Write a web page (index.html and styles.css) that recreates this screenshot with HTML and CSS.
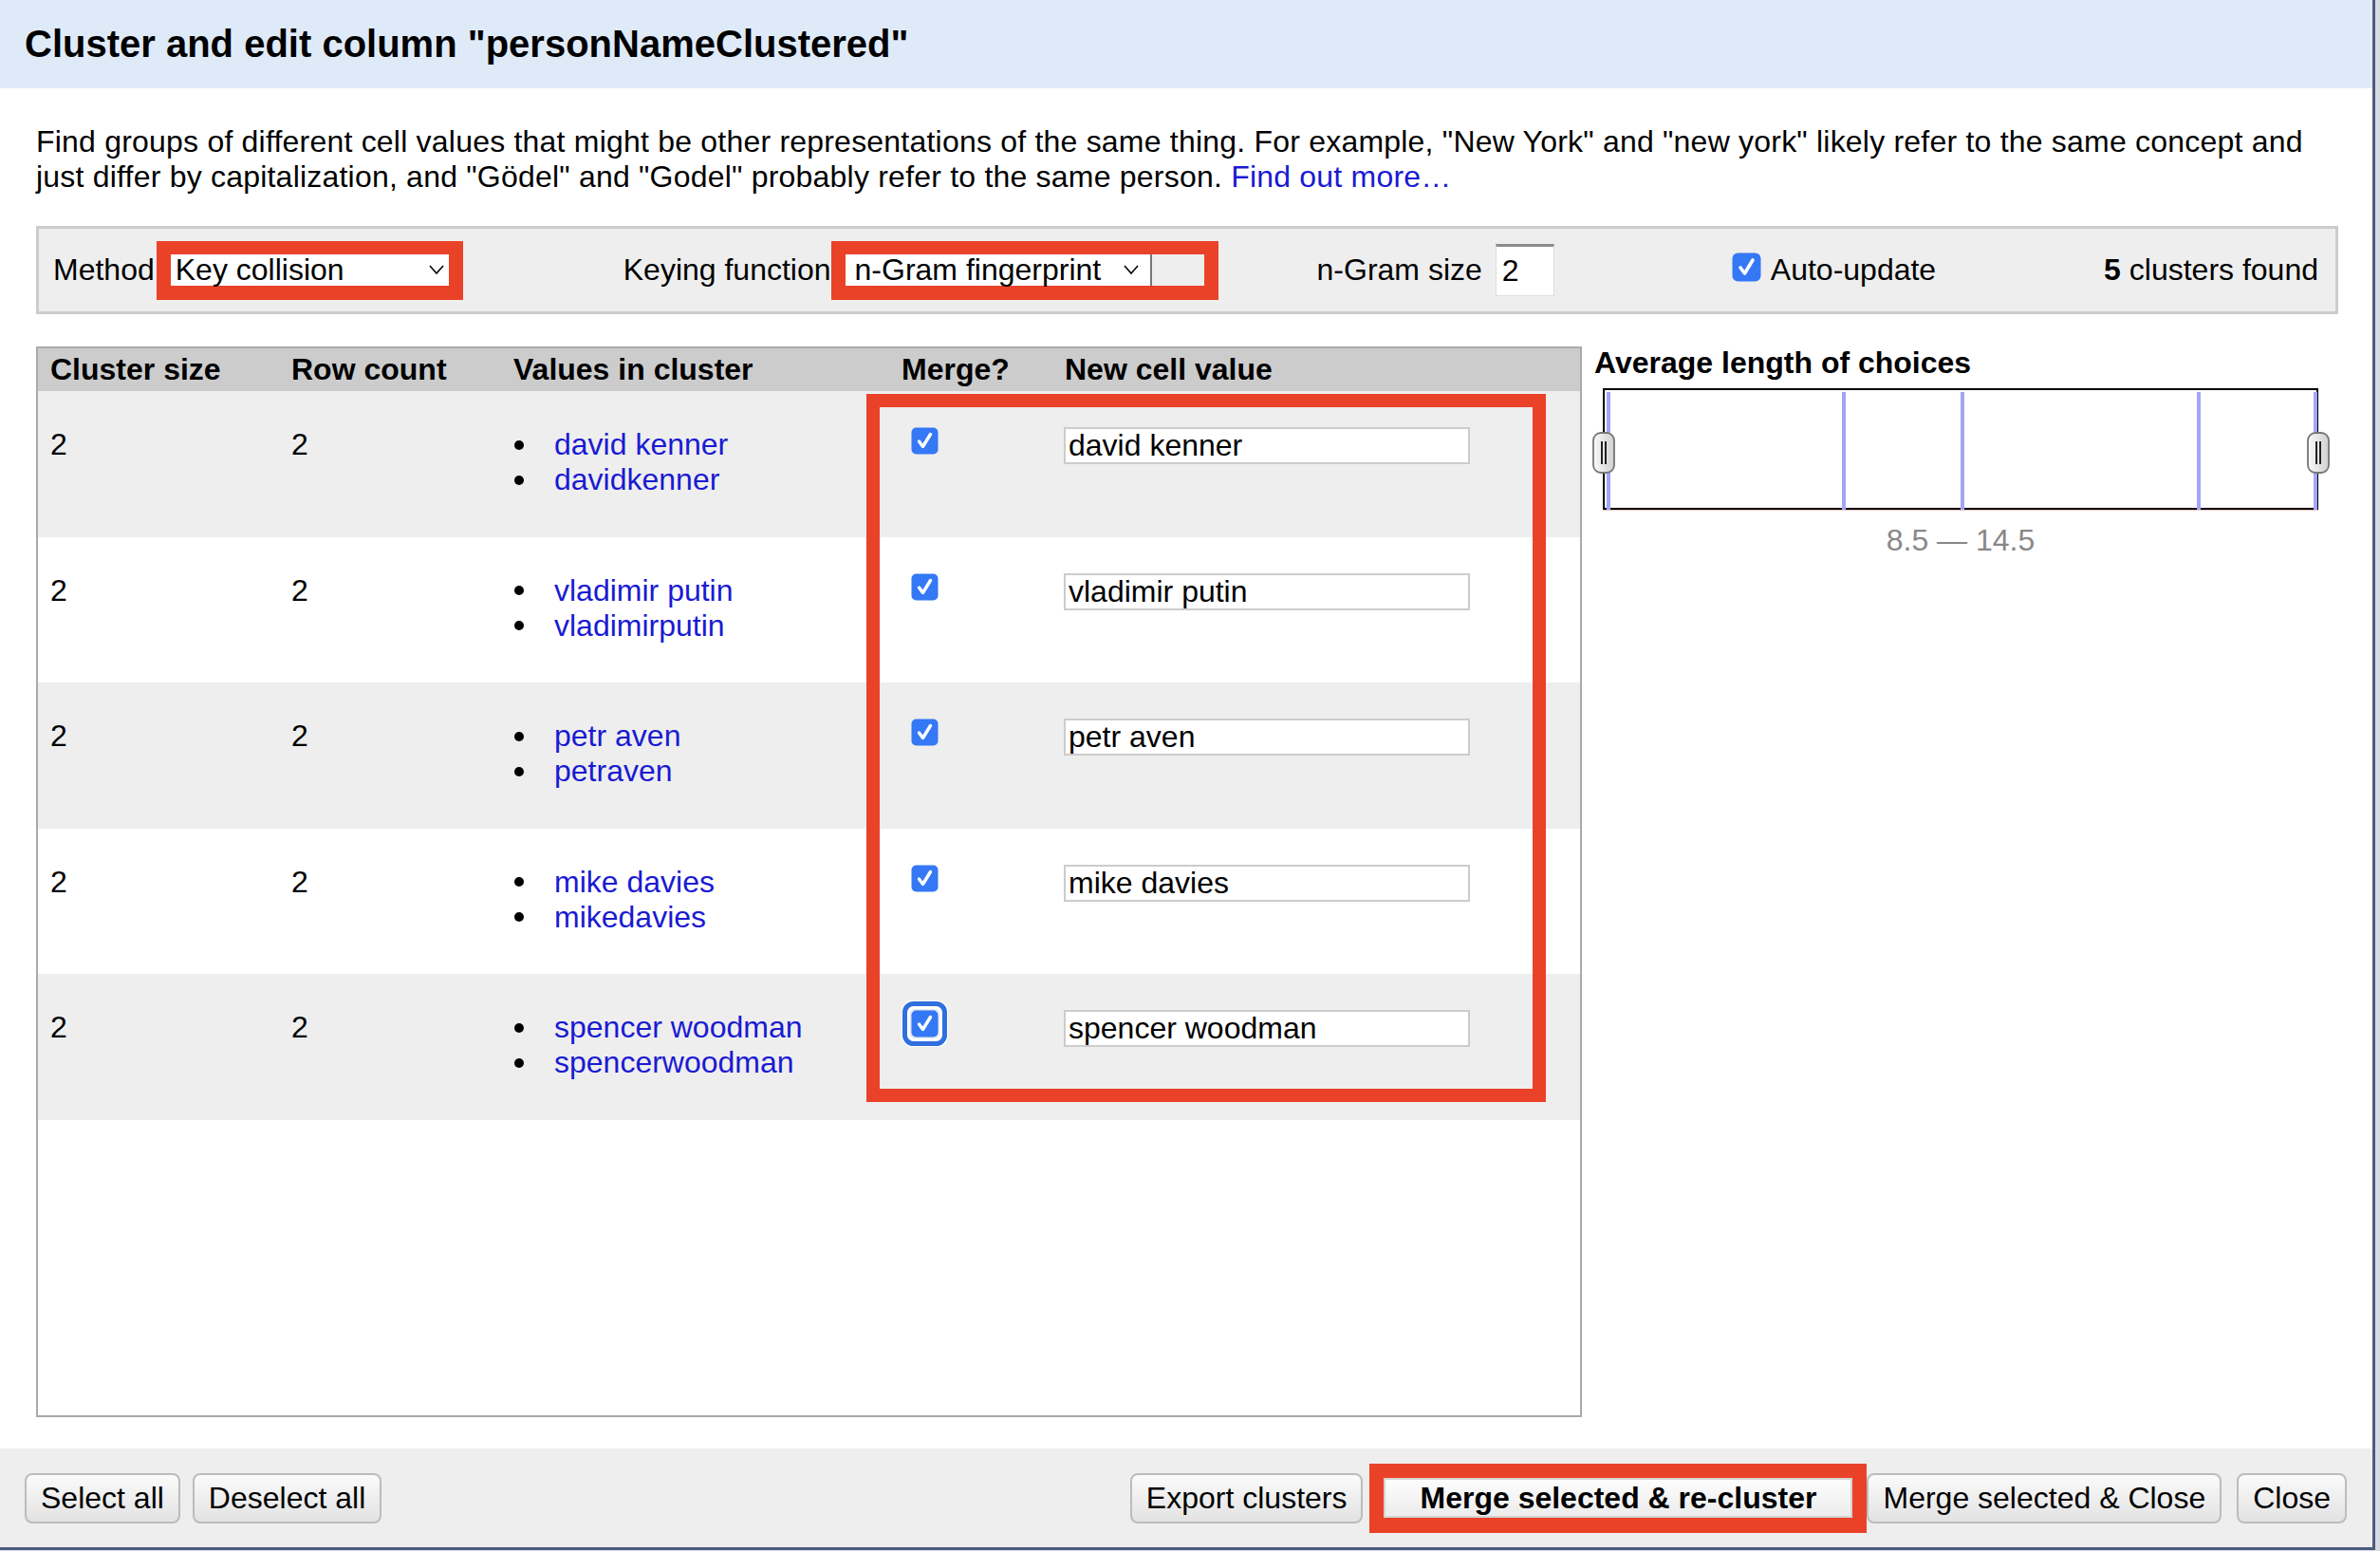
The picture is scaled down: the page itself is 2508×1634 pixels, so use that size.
FILE: index.html
```html
<!DOCTYPE html>
<html>
<head>
<meta charset="utf-8">
<title>Cluster and edit column</title>
<link rel="stylesheet" href="styles.css">
</head>
<body>
<div class="dialog">
  <div class="dlg-header">Cluster and edit column "personNameClustered"</div>
  <div class="dlg-body">
    <p class="desc">Find groups of different cell values that might be other representations of the same thing. For example, "New York" and "new york" likely refer to the same concept and<br>just differ by capitalization, and "Gödel" and "Godel" probably refer to the same person. <a class="link">Find out more…</a></p>

    <div class="controls">
      <span class="lbl">Method</span>
      <span class="hl hl-method"><span class="select sel-method"><span>Key collision</span><svg class="chev" width="16" height="10" viewBox="0 0 16 10"><polyline points="1,1 8,9 15,1" fill="none" stroke="#000" stroke-width="1.6"/></svg></span></span>
      <span class="lbl lbl-keying">Keying function</span>
      <span class="hl hl-keying"><span class="select sel-keying"><span>n-Gram fingerprint</span><svg class="chev" width="16" height="10" viewBox="0 0 16 10"><polyline points="1,1 8,9 15,1" fill="none" stroke="#000" stroke-width="1.6"/></svg></span><span class="sel-extra"></span></span>
      <span class="lbl lbl-ngram">n-Gram size</span>
      <span class="num-input">2</span>
      <span class="auto"><svg class="cb" width="31" height="31" viewBox="0 0 31 31"><rect x="0.5" y="0.5" width="30" height="30" rx="6" fill="#3478f6"/><polyline points="9,16 13.5,22 22,8" fill="none" stroke="#fff" stroke-width="3.6" stroke-linecap="round" stroke-linejoin="round"/></svg><span>Auto-update</span></span>
      <span class="found"><b>5</b> clusters found</span>
    </div>

    <div class="main">
      <div class="table-box">
        <div class="grid thead">
          <div class="c">Cluster size</div>
          <div class="c">Row count</div>
          <div class="c">Values in cluster</div>
          <div class="c">Merge?</div>
          <div class="c">New cell value</div>
        </div>

        <div class="grid trow odd">
          <div class="c">2</div>
          <div class="c">2</div>
          <div class="c"><ul class="vals"><li><span class="dot"></span><a class="link">david kenner</a></li><li><span class="dot"></span><a class="link">davidkenner</a></li></ul></div>
          <div class="c"><svg class="chk" width="29" height="29" viewBox="0 0 29 29"><rect x="0.5" y="0.5" width="28" height="28" rx="5" fill="#3478f6"/><polyline points="8.5,15 12.5,20.5 20.5,7.5" fill="none" stroke="#fff" stroke-width="3.4" stroke-linecap="round" stroke-linejoin="round"/></svg></div>
          <div class="c"><span class="cell-input">david kenner</span></div>
        </div>

        <div class="grid trow">
          <div class="c">2</div>
          <div class="c">2</div>
          <div class="c"><ul class="vals"><li><span class="dot"></span><a class="link">vladimir putin</a></li><li><span class="dot"></span><a class="link">vladimirputin</a></li></ul></div>
          <div class="c"><svg class="chk" width="29" height="29" viewBox="0 0 29 29"><rect x="0.5" y="0.5" width="28" height="28" rx="5" fill="#3478f6"/><polyline points="8.5,15 12.5,20.5 20.5,7.5" fill="none" stroke="#fff" stroke-width="3.4" stroke-linecap="round" stroke-linejoin="round"/></svg></div>
          <div class="c"><span class="cell-input">vladimir putin</span></div>
        </div>

        <div class="grid trow odd">
          <div class="c">2</div>
          <div class="c">2</div>
          <div class="c"><ul class="vals"><li><span class="dot"></span><a class="link">petr aven</a></li><li><span class="dot"></span><a class="link">petraven</a></li></ul></div>
          <div class="c"><svg class="chk" width="29" height="29" viewBox="0 0 29 29"><rect x="0.5" y="0.5" width="28" height="28" rx="5" fill="#3478f6"/><polyline points="8.5,15 12.5,20.5 20.5,7.5" fill="none" stroke="#fff" stroke-width="3.4" stroke-linecap="round" stroke-linejoin="round"/></svg></div>
          <div class="c"><span class="cell-input">petr aven</span></div>
        </div>

        <div class="grid trow">
          <div class="c">2</div>
          <div class="c">2</div>
          <div class="c"><ul class="vals"><li><span class="dot"></span><a class="link">mike davies</a></li><li><span class="dot"></span><a class="link">mikedavies</a></li></ul></div>
          <div class="c"><svg class="chk" width="29" height="29" viewBox="0 0 29 29"><rect x="0.5" y="0.5" width="28" height="28" rx="5" fill="#3478f6"/><polyline points="8.5,15 12.5,20.5 20.5,7.5" fill="none" stroke="#fff" stroke-width="3.4" stroke-linecap="round" stroke-linejoin="round"/></svg></div>
          <div class="c"><span class="cell-input">mike davies</span></div>
        </div>

        <div class="grid trow odd">
          <div class="c">2</div>
          <div class="c">2</div>
          <div class="c"><ul class="vals"><li><span class="dot"></span><a class="link">spencer woodman</a></li><li><span class="dot"></span><a class="link">spencerwoodman</a></li></ul></div>
          <div class="c"><svg class="chk chk-focus" width="51" height="51" viewBox="0 0 51 51"><rect x="1" y="1" width="49" height="49" rx="11" fill="#fff"/><rect x="4.5" y="4.5" width="42" height="42" rx="9" fill="none" stroke="#2f6fde" stroke-width="5"/><rect x="10" y="10" width="31" height="31" rx="5" fill="#e2e6ee"/><rect x="11.5" y="11.5" width="28" height="28" rx="5" fill="#3478f6"/><polyline points="19.5,26 23.5,31.5 31.5,18.5" fill="none" stroke="#fff" stroke-width="3.4" stroke-linecap="round" stroke-linejoin="round"/></svg></div>
          <div class="c"><span class="cell-input">spencer woodman</span></div>
        </div>

        <div class="hl-merge"></div>
      </div>

      <div class="side">
        <div class="side-title">Average length of choices</div>
        <div class="hist">
          <span class="bar" style="left:2px"></span>
          <span class="bar" style="left:250px"></span>
          <span class="bar" style="left:375px"></span>
          <span class="bar" style="left:624px"></span>
          <span class="bar" style="left:747px"></span>
          <svg class="handle handle-l" width="24" height="44" viewBox="0 0 24 44"><defs><linearGradient id="hg" x1="0" y1="0" x2="1" y2="0"><stop offset="0" stop-color="#fafafa"/><stop offset="1" stop-color="#d0d0d0"/></linearGradient></defs><rect x="1" y="1" width="22" height="42" rx="8" fill="url(#hg)" stroke="#777" stroke-width="1.8"/><line x1="10" y1="10" x2="10" y2="34" stroke="#222" stroke-width="2"/><line x1="14" y1="10" x2="14" y2="34" stroke="#222" stroke-width="2"/></svg>
          <svg class="handle handle-r" width="24" height="44" viewBox="0 0 24 44"><rect x="1" y="1" width="22" height="42" rx="8" fill="url(#hg)" stroke="#777" stroke-width="1.8"/><line x1="10" y1="10" x2="10" y2="34" stroke="#222" stroke-width="2"/><line x1="14" y1="10" x2="14" y2="34" stroke="#222" stroke-width="2"/></svg>
        </div>
        <div class="range">8.5 — 14.5</div>
      </div>
    </div>
  </div>

  <div class="footer">
    <button class="btn">Select all</button>
    <button class="btn btn-gap">Deselect all</button>
    <span class="spacer"></span>
    <button class="btn">Export clusters</button>
    <span class="hl-btn"><button class="btn-main">Merge selected &amp; re-cluster</button></span>
    <button class="btn">Merge selected &amp; Close</button>
    <button class="btn btn-close">Close</button>
  </div>
</div>
</body>
</html>
```

FILE: styles.css
```css
* { box-sizing: border-box; }

html, body {
  margin: 0;
  padding: 0;
}

body {
  width: 2508px;
  height: 1634px;
  overflow: hidden;
  background: #d8dae2;
  font-family: "Liberation Sans", Arial, Helvetica, sans-serif;
  color: #000;
}

.dialog {
  width: 2503px;
  height: 1633px;
  background: #fff;
  border-right: 3px solid #4b5b7c;
  border-bottom: 3px solid #4b5b7c;
  display: flex;
  flex-direction: column;
}

.dlg-header {
  flex: none;
  height: 93px;
  background: #dfeaf8;
  padding-left: 26px;
  font-size: 40px;
  font-weight: bold;
  line-height: 93px;
  white-space: nowrap;
}

.dlg-body {
  flex: 1;
  min-height: 0;
  padding: 0 36px 0 38px;
  display: flex;
  flex-direction: column;
}

.desc {
  margin: 38px 0 0;
  font-size: 32px;
  line-height: 37px;
  letter-spacing: 0.21px;
  white-space: nowrap;
}

.link {
  color: #1a1ad2;
  text-decoration: none;
}

/* ---------- controls bar ---------- */
.controls {
  flex: none;
  margin-top: 33px;
  height: 93px;
  background: #eee;
  border: 3px solid #ccc;
  display: flex;
  align-items: center;
  padding: 0 18px 0 15px;
  font-size: 32px;
  white-space: nowrap;
}

.lbl { line-height: 37px; }

.hl {
  display: flex;
  border-style: solid;
  border-color: #ea4228;
  border-width: 14px 15px 15px 15px;
  margin-left: 2px;
}

.select {
  display: flex;
  align-items: center;
  justify-content: space-between;
  height: 33px;
  background: #fff;
  line-height: 33px;
}

.sel-method {
  width: 293px;
  padding: 0 5px 0 5px;
}

.sel-keying {
  width: 321px;
  padding: 0 12px 0 10px;
}

.sel-extra {
  width: 57px;
  height: 33px;
  background: #eee;
  border-left: 2px solid #777;
}

.chev { flex: none; }

.lbl-keying { margin-left: 169px; }
.hl-keying { margin-left: 0; }

.lbl-ngram { margin-left: 104px; }

.num-input {
  margin-left: 14px;
  width: 62px;
  height: 55px;
  background: #fff;
  border-top: 3px solid #8c8c8c;
  border-left: 1px solid #ddd;
  border-right: 1px solid #ddd;
  border-bottom: 1px solid #ddd;
  padding-left: 6px;
  line-height: 50px;
}

.auto {
  margin-left: 187px;
  display: flex;
  align-items: center;
  gap: 10px;
}

.cb { display: block; margin-top: -6px; }

.found { margin-left: auto; }

/* ---------- main area ---------- */
.main {
  flex: none;
  margin-top: 34px;
  height: 1128px;
  display: flex;
}

.table-box {
  position: relative;
  width: 1629px;
  flex: none;
  border: 2px solid #aaa;
  font-size: 32px;
}

.grid {
  display: grid;
  grid-template-columns: 254px 234px 409px 172px 1fr;
}

.c { padding-left: 13px; }

.thead {
  height: 45px;
  background: #ccc;
  font-weight: bold;
  align-items: center;
  line-height: 37px;
  white-space: nowrap;
}

.trow {
  height: 153.6px;
  padding-top: 38px;
  line-height: 37px;
  background: #fff;
  align-items: start;
}

.trow.odd { background: #eee; }

.vals {
  list-style: none;
  margin: 0;
  padding: 0;
}

.vals li {
  display: flex;
  align-items: center;
}

.dot {
  width: 10px;
  height: 10px;
  border-radius: 50%;
  background: #000;
  margin: 0 32px 0 1px;
  flex: none;
}

.chk {
  display: block;
  margin-left: 10px;
}

.chk-focus { margin: -11px 0 0 -1px; }

.cell-input {
  display: block;
  width: 428px;
  height: 39px;
  margin-left: -1px;
  background: #fff;
  border: 2px solid #ccc;
  padding-left: 3px;
  line-height: 35px;
  white-space: nowrap;
}

.hl-merge {
  position: absolute;
  left: 873px;
  top: 48px;
  width: 716px;
  height: 746px;
  border: 14px solid #ea4228;
  pointer-events: none;
}

/* ---------- side panel ---------- */
.side {
  margin-left: 13px;
  flex: 1;
}

.side-title {
  font-size: 32px;
  font-weight: bold;
  line-height: 34px;
  white-space: nowrap;
}

.hist {
  position: relative;
  margin: 10px 0 0 9px;
  width: 754px;
  height: 128px;
  border: 2px solid #000;
  box-shadow: 0 1px 0 #f2c4c4;
}

.bar {
  position: absolute;
  top: 2px;
  bottom: -2px;
  width: 4px;
  background: #a2a5f8;
}

.handle {
  position: absolute;
  top: 44px;
  display: block;
}

.handle-l { left: -13px; }
.handle-r { left: 740px; }

.range {
  margin: 14px 0 0 9px;
  width: 754px;
  text-align: center;
  color: #888;
  font-size: 32px;
  line-height: 37px;
}

/* ---------- footer ---------- */
.footer {
  flex: none;
  height: 104px;
  background: #eee;
  display: flex;
  align-items: center;
  padding: 0 27px 0 26px;
}

.btn {
  font-family: "Liberation Sans", Arial, Helvetica, sans-serif;
  font-size: 32px;
  line-height: 37px;
  color: #000;
  padding: 6px 15px;
  border: 2px solid #bcbcbc;
  border-radius: 8px;
  background: linear-gradient(#fbfbfb, #e2e2e2);
  white-space: nowrap;
}

.btn-gap { margin-left: 13px; }

.spacer { flex: 1; }

.hl-btn {
  margin-left: 7px;
  display: flex;
  border-style: solid;
  border-color: #ea4228;
  border-width: 15px 15px 16px 15px;
}

.btn-main {
  width: 494px;
  height: 42px;
  font-family: "Liberation Sans", Arial, Helvetica, sans-serif;
  font-size: 32px;
  font-weight: bold;
  line-height: 38px;
  color: #000;
  padding: 0;
  border: 2px solid #d4d4d4;
  border-radius: 0;
  background: linear-gradient(#fdfdfd, #ececec);
  white-space: nowrap;
}

.btn-close { margin-left: 16px; }
```
